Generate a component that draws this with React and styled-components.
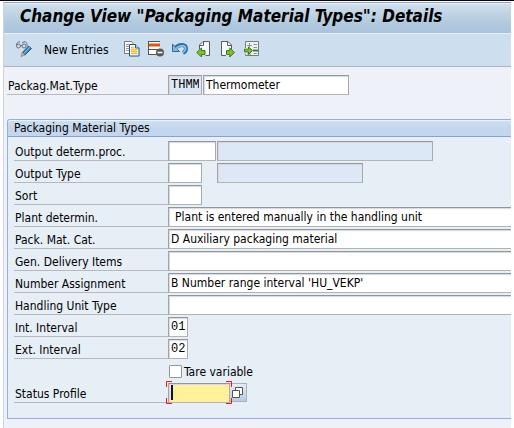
import React from 'react';
import styled, { createGlobalStyle } from 'styled-components';

const sans = '"DejaVu Sans Condensed", "DejaVu Sans", Verdana, sans-serif';
const mono = '"Liberation Mono", "Courier New", monospace';

const GlobalStyle = createGlobalStyle`
  *, *::before, *::after { box-sizing: border-box; }
  body { margin: 0; background: #fff; font: 12px/16px ${sans}; color: #000; }
  button, input, select { font: inherit; color: inherit; }
`;

const Window = styled.main`
  min-height: 100vh;
  padding: 0 3px;
  border-top: 1px solid #05040c;
  display: flex;
  flex-direction: column;
`;

const Screen = styled.div`
  flex: 1;
  margin-top: 1px;
  border-left: 1px solid #ccd3e2;
  border-top: 1px solid #8f9fc4;
  background: #eef1f7;
  overflow: hidden;
`;

const Title = styled.h1`
  margin: 0;
  height: 31px;
  padding-left: 16px;
  border-top: 1px solid #e9f1f9;
  border-bottom: 1px solid #e6f0f8;
  background: linear-gradient(#cfdfec, #b4cbdd 60%, #a9c3df);
  font: italic bold 17px/25px ${sans};
  white-space: nowrap;
`;

const Toolbar = styled.div`
  height: 33px;
  padding: 0 11px 2px 12px;
  display: flex;
  align-items: center;
  gap: 8px;
  background: #cddfef;
  border-bottom: 1px solid #a7b5c7;
`;

const IconButton = styled.button`
  width: 16px;
  height: 16px;
  padding: 0;
  border: 0;
  background: none;
  svg { display: block; }
`;

const TextButton = styled.button`
  width: 76px;
  padding: 2px 0 0 4px;
  border: 0;
  background: none;
  text-align: left;
  white-space: nowrap;
`;

const KeyArea = styled.div`
  padding: 8px 0 22px 3px;
`;

const Row = styled.div`
  display: flex;
  align-items: flex-start;
  height: 22px;
`;

const Label = styled.label`
  flex: none;
  width: ${(p) => (p.$wide ? 161 : 154)}px;
  height: 20px;
  padding: 3px 0 0 1px;
  border-bottom: 1px solid ${(p) => (p.$plain ? 'transparent' : '#b9b7bd')};
  white-space: nowrap;
`;

const fieldFrame = `
  height: 20px;
  padding: 0 2px;
  border: 1px solid;
  border-color: #8f989c #a9a9ab #b3b2b4 #a2a3a8;
  border-radius: 0;
  box-shadow: inset 1px 1px 1px #d9d6df;
  outline: 0;
`;

const Field = styled.input`
  ${fieldFrame}
  width: ${(p) => p.$width}px;
  margin-right: ${(p) => p.$gap || 1}px;
  background: ${(p) => (p.readOnly ? '#dce8f5' : '#fff')};
  font-family: ${(p) => (p.$code ? mono : sans)};
`;

const Choice = styled.select`
  ${fieldFrame}
  appearance: none;
  flex: 1;
  min-width: 0;
  border-right: 0;
  background: #fff;
  padding-left: ${(p) => (p.$indent ? 6 : 2)}px;
`;

const Group = styled.fieldset`
  margin: 0 0 0 3px;
  padding: 0;
  min-width: 0;
  border: 1px solid #93afda;
  border-right: 0;
  border-radius: 3px 0 0 0;
  background: #e6eef6;
`;

const GroupTitle = styled.h2`
  margin: 0;
  height: 17px;
  padding-left: 6px;
  border-top: 1px solid #e9f1f9;
  border-bottom: 1px solid #84a3ce;
  border-radius: 2px 0 0 0;
  background: linear-gradient(#cddfee, #c4d6ee 50%);
  font: 12px/15px ${sans};
`;

const GroupBody = styled.div`
  padding: 4px 0 13px 6px;
`;

const Check = styled.input`
  appearance: none;
  width: 13px;
  height: 13px;
  margin: 4px 2px 0 1px;
  border: 1px solid #8f989c;
  border-radius: 1px;
  background: #fff;
`;

const CheckLabel = styled.label`
  padding-top: 3px;
`;

const Focus = styled.div`
  position: relative;
  display: flex;
`;

const ActiveField = styled.input`
  ${fieldFrame}
  width: 62px;
  background: #fff09a;
  caret-color: #0a1050;
`;

const Caret = styled.span`
  position: absolute;
  left: 3px;
  top: 2px;
  width: 2px;
  height: 15px;
  background: #0a1050;
`;

const Corners = styled.svg`
  position: absolute;
  z-index: 1;
  left: -2px;
  top: -2px;
  pointer-events: none;
`;

const HelpButton = styled.button`
  width: 17px;
  height: 19px;
  padding: 0;
  border: 1px solid #a5b3c5;
  border-left: 0;
  background: linear-gradient(#e6eef6, #b5cbe4);
  svg { display: block; }
`;

const Icon = ({ children, w = 16, h = 16 }) => (
  <svg width={w} height={h} viewBox={`0 0 ${w} ${h}`} fill="none" aria-hidden="true">{children}</svg>
);

const GREEN = { fill: '#7fbf2c', stroke: '#3b7a1c', strokeWidth: 1 };

const GlassesPencil = () => (
  <Icon>
    <g stroke="#6b7075">
      <circle cx="2.5" cy="5" r="2" />
      <circle cx="8" cy="5" r="2" />
      <path d="M.5 4.500V3L2.500 .8H4M4.500 4.500H6M6 2L8 .8h1.500l1.500 2v2" />
    </g>
    <path d="M6.500 11.500L12.500 5l3 2.500-6.500 6.500z" fill="#3e86b8" stroke="#1e5c8b" />
    <path d="M8 12.500L14 6" stroke="#8cc0df" />
    <path d="M5 15.500l1.200-4L9.200 14z" fill="#e8b377" stroke="#82705d" strokeWidth=".6" />
  </Icon>
);

const Copy = () => (
  <Icon>
    <path d="M.5 12.500V.5h7l1.500 2v10z" fill="#fafafa" stroke="#77797a" />
    <path d="M2 3.500h3M2 5.500h3M2 7.500h3M2 9.500h3" stroke="#99a" />
    <path d="M5.500 3.500h6l3.500 3.500v8H5.500z" fill="#fff" stroke="#17598d" />
    <path d="M11.500 3.500V7H15" fill="#d3e5f3" stroke="#17598d" />
    <path d="M7 6.500h3M7 8.500h6.500M7 10.500h6.500M7 12.500h6.500" stroke="#f2bd28" strokeWidth="1.300" />
  </Icon>
);

const DeleteRow = () => (
  <Icon>
    <path d="M.5 .5h11v13H.5z" fill="#fff" />
    <path d="M0 .5h12M.5 0v14M0 8.500h12M0 13.500h9" stroke="#55554f" />
    <path d="M1 2.500h11v3H1z" fill="#e35312" />
    <circle cx="12" cy="11.500" r="4" fill="#5a5a55" />
    <path d="M9.500 11.500h5" stroke="#fff" strokeWidth="1.500" />
  </Icon>
);

const Undo = () => (
  <Icon>
    <path d="M3 7.500C7 2.500 14 3 14 7.500c0 2-1 3.500-3 4.500" stroke="#286b9f" strokeWidth="4" />
    <path d="M.5 3v7.500h7L5.300 8.300 2.800 5.500z" fill="#86b5d5" stroke="#286b9f" />
    <path d="M4 7.500C8 3.800 13.500 4 13.500 7.500c0 1.800-1 3-2.500 4" stroke="#8dbbda" strokeWidth="2" />
  </Icon>
);

const PreviousEntry = () => (
  <Icon>
    <path d="M3.500 5V4l3-3.500h7.500v14H9" fill="#f7f9fa" />
    <path d="M3.500 8V4L7 .5h6.500v14H9.500M7.500 1v3.500H4" stroke="#5b5d58" />
    <path d="M.7 11.500L5.500 7v2.500H9v4H5.500V16z" {...GREEN} />
  </Icon>
);

const NextEntry = () => (
  <Icon>
    <path d="M1.500 .5h6.500l3.500 3.500v10.500h-10z" fill="#f7f9fa" />
    <path d="M11.500 8V4L8 .5H1.500v14H6M7.500 1v3.500H11" stroke="#5b5d58" />
    <path d="M14.500 11.500L9.800 7v2.500H6.500v4h3.300V16z" {...GREEN} />
  </Icon>
);

const OtherEntry = () => (
  <Icon>
    <path d="M1.500 .5h13v14h-13z" fill="#eef1f2" />
    <path d="M1.500 7V.5h13v14h-13V13" stroke="#777c78" />
    <path d="M3 4.500h5M5.500 2v4M9.500 3.500H13M9.500 6.500H13M3 13h4M9.500 12.500H13" stroke="#8c9492" />
    <path d="M9 9.500h5" stroke="#357f48" strokeWidth="2" />
    <path d="M8.500 9.500L4.500 6v2.200H.5v2.800h4V13.500z" {...GREEN} />
  </Icon>
);

const FocusCorners = () => (
  <Corners width="66" height="24" viewBox="0 0 66 24" fill="none" aria-hidden="true">
    <path d="M.5 6V.5H6M60 .5h5.500V6M.5 17v5.500H6M60 22.500h5.500V17" stroke="#f01018" />
  </Corners>
);

const tools = [
  ['Copy As...', Copy],
  ['Delete', DeleteRow],
  ['Undo Change', Undo],
  ['Previous Entry', PreviousEntry],
  ['Next Entry', NextEntry],
  ['Other Entry', OtherEntry],
];

const choices = [
  { id: 'plant', label: 'Plant determin.', value: 'Plant is entered manually in the handling unit', indent: true },
  { id: 'category', label: 'Pack. Mat. Cat.', value: 'D Auxiliary packaging material' },
  { id: 'delivery', label: 'Gen. Delivery Items', value: '' },
  { id: 'numbering', label: 'Number Assignment', value: "B Number range interval 'HU_VEKP'" },
  { id: 'hutype', label: 'Handling Unit Type', value: '' },
];

export default function App() {
  return (
    <Window>
      <GlobalStyle />
      <Screen>
        <Title>Change View "Packaging Material Types": Details</Title>
        <Toolbar>
          <IconButton aria-label="Display/Change"><GlassesPencil /></IconButton>
          <TextButton>New Entries</TextButton>
          {tools.map(([name, Glyph]) => (
            <IconButton key={name} aria-label={name}><Glyph /></IconButton>
          ))}
        </Toolbar>
        <KeyArea>
          <Row>
            <Label $wide htmlFor="type">Packag.Mat.Type</Label>
            <Field id="type" $width={34} $code readOnly defaultValue="THMM" />
            <Field aria-label="Description" $width={146} defaultValue="Thermometer" />
          </Row>
        </KeyArea>
        <Group aria-labelledby="group-title">
          <GroupTitle id="group-title">Packaging Material Types</GroupTitle>
          <GroupBody>
            <Row>
              <Label htmlFor="proc">Output determ.proc.</Label>
              <Field id="proc" $width={48} />
              <Field aria-label="Procedure description" $width={216} readOnly />
            </Row>
            <Row>
              <Label htmlFor="output">Output Type</Label>
              <Field id="output" $width={34} $gap={15} />
              <Field aria-label="Output type description" $width={146} readOnly />
            </Row>
            <Row>
              <Label htmlFor="sort">Sort</Label>
              <Field id="sort" $width={34} />
            </Row>
            {choices.map((c) => (
              <Row key={c.id}>
                <Label htmlFor={c.id}>{c.label}</Label>
                <Choice id={c.id} $indent={c.indent} defaultValue={c.value}>
                  <option>{c.value}</option>
                </Choice>
              </Row>
            ))}
            <Row>
              <Label htmlFor="int">Int. Interval</Label>
              <Field id="int" $width={20} $code defaultValue="01" />
            </Row>
            <Row>
              <Label htmlFor="ext">Ext. Interval</Label>
              <Field id="ext" $width={20} $code defaultValue="02" />
            </Row>
            <Row>
              <Label as="span" $plain />
              <Check type="checkbox" id="tare" />
              <CheckLabel htmlFor="tare">Tare variable</CheckLabel>
            </Row>
            <Row>
              <Label htmlFor="status">Status Profile</Label>
              <Focus>
                <ActiveField id="status" />
                <Caret />
                <FocusCorners />
                <HelpButton aria-label="Show values">
                  <Icon w={16} h={17}>
                    <path d="M5.500 3.500h7v7h-7z" fill="#fff" stroke="#55534d" />
                    <path d="M2.500 6.500h7v7h-7z" fill="#fff" stroke="#55534d" />
                  </Icon>
                </HelpButton>
              </Focus>
            </Row>
          </GroupBody>
        </Group>
      </Screen>
    </Window>
  );
}
